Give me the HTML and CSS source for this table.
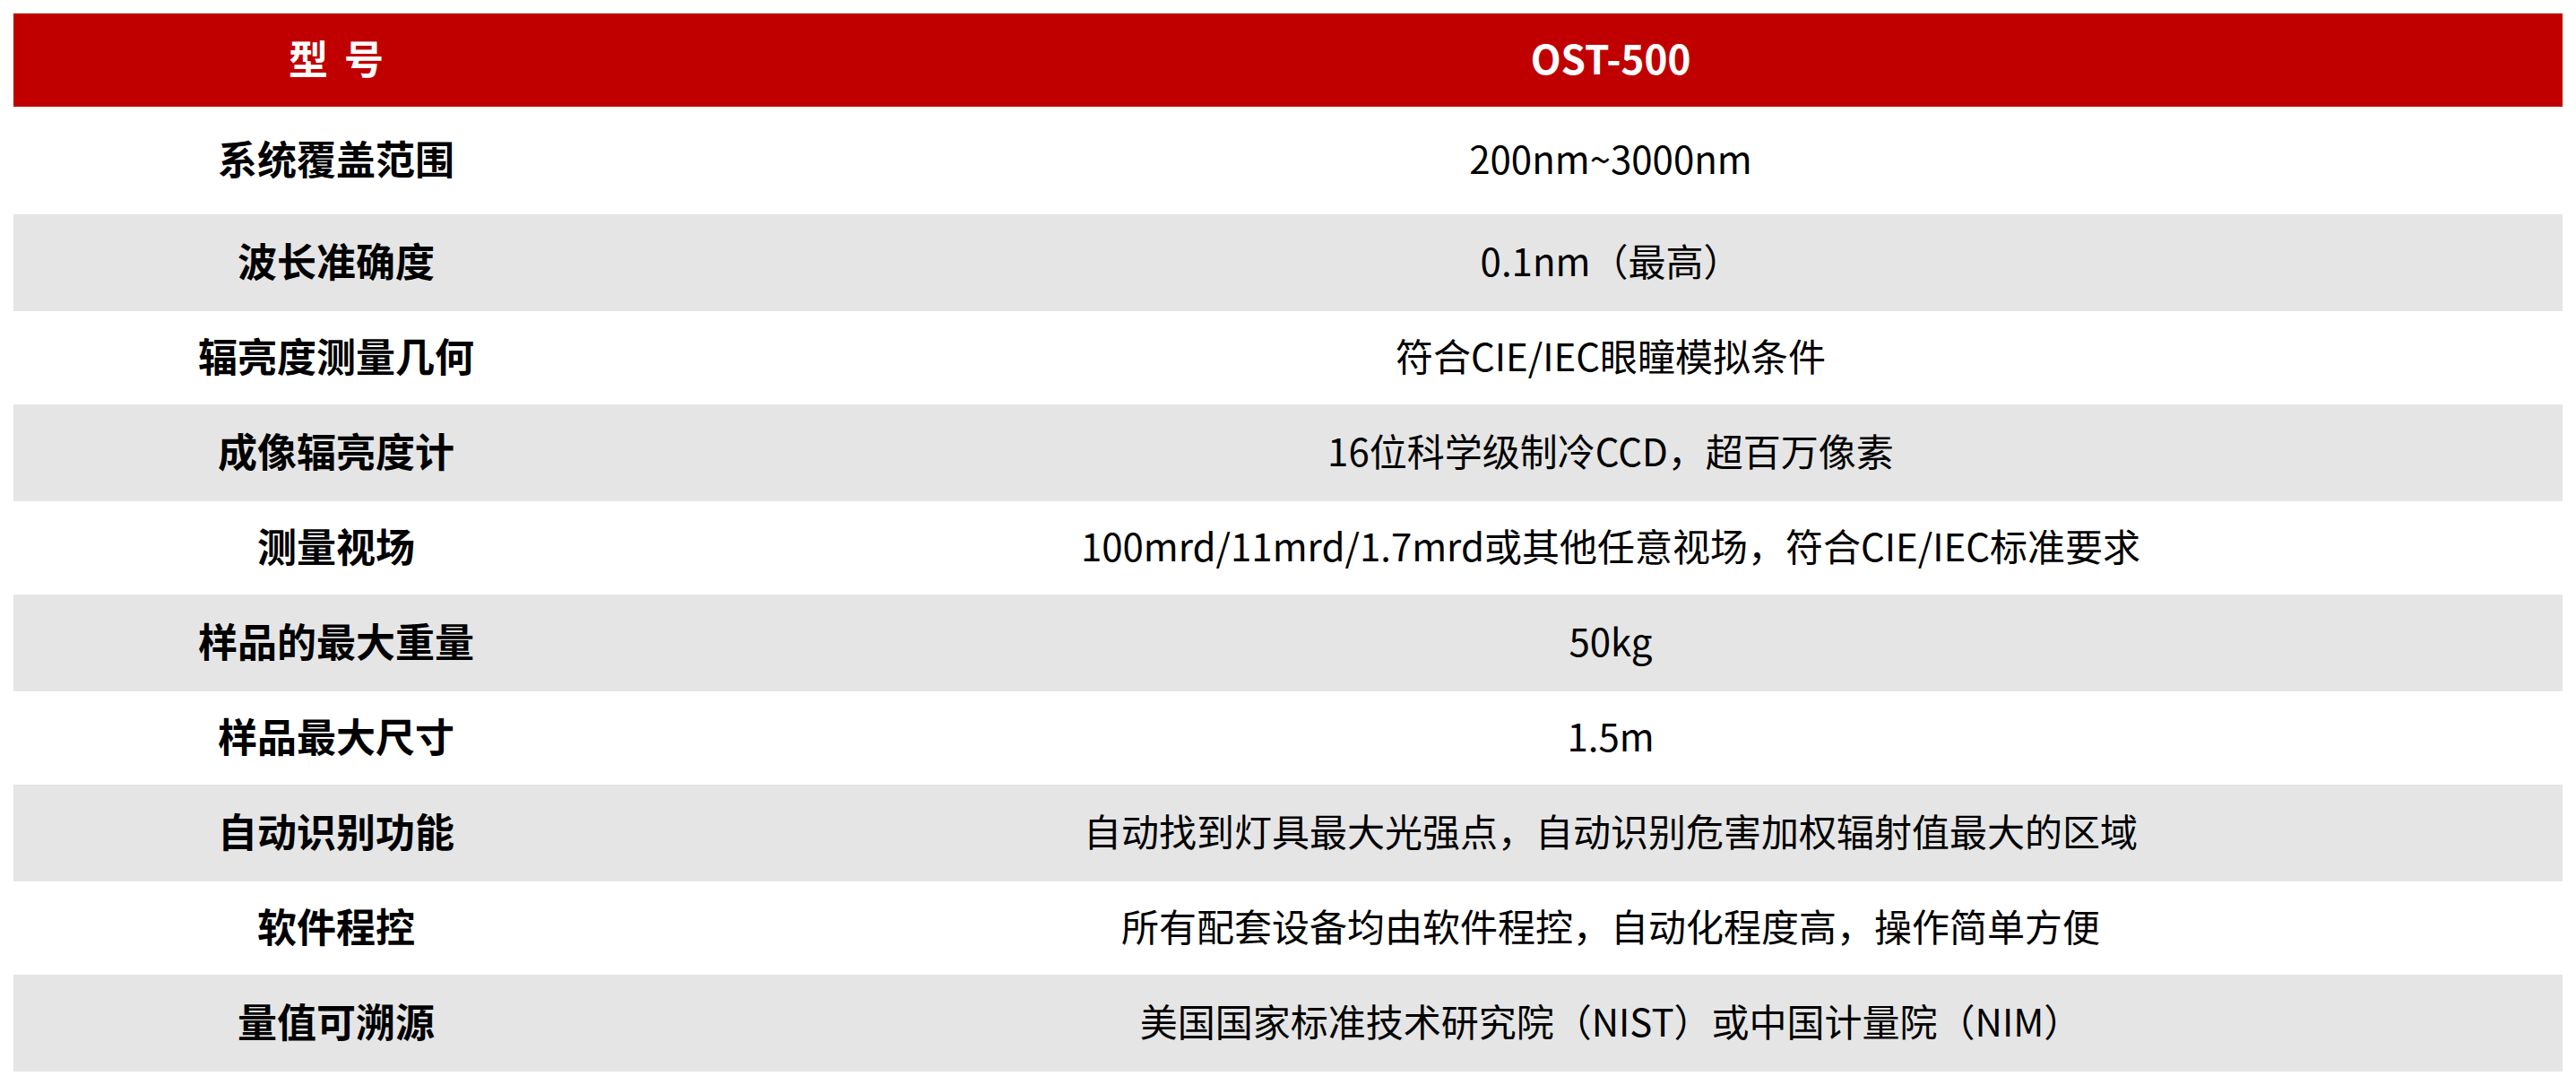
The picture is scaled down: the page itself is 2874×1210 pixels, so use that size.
FILE: index.html
```html
<!DOCTYPE html>
<html lang="zh-CN">
<head>
<meta charset="utf-8">
<title>OST-500 参数</title>
<link rel="stylesheet" href="styles.css">
</head>
<body>
<div class="spec">
  <div class="row head">
    <div class="cell label"><span class="model-title">型 号</span></div>
    <div class="cell value">OST-500</div>
  </div>
  <div class="row white first">
    <div class="cell label">系统覆盖范围</div>
    <div class="cell value">200nm~3000nm</div>
  </div>
  <div class="row gray">
    <div class="cell label">波长准确度</div>
    <div class="cell value">0.1nm（最高）</div>
  </div>
  <div class="row white">
    <div class="cell label">辐亮度测量几何</div>
    <div class="cell value">符合CIE/IEC眼瞳模拟条件</div>
  </div>
  <div class="row gray">
    <div class="cell label">成像辐亮度计</div>
    <div class="cell value">16位科学级制冷CCD，超百万像素</div>
  </div>
  <div class="row white">
    <div class="cell label">测量视场</div>
    <div class="cell value">100mrd/11mrd/1.7mrd或其他任意视场，符合CIE/IEC标准要求</div>
  </div>
  <div class="row gray">
    <div class="cell label">样品的最大重量</div>
    <div class="cell value">50kg</div>
  </div>
  <div class="row white">
    <div class="cell label">样品最大尺寸</div>
    <div class="cell value">1.5m</div>
  </div>
  <div class="row gray">
    <div class="cell label">自动识别功能</div>
    <div class="cell value">自动找到灯具最大光强点，自动识别危害加权辐射值最大的区域</div>
  </div>
  <div class="row white">
    <div class="cell label">软件程控</div>
    <div class="cell value">所有配套设备均由软件程控，自动化程度高，操作简单方便</div>
  </div>
  <div class="row gray">
    <div class="cell label">量值可溯源</div>
    <div class="cell value">美国国家标准技术研究院（NIST）或中国计量院（NIM）</div>
  </div>
</div>
</body>
</html>
```

FILE: styles.css
```css
html, body {
  margin: 0;
  padding: 0;
  background: #ffffff;
}

body {
  font-family: "Noto Sans CJK SC", "Noto Sans", sans-serif;
  color: #000000;
}

.spec {
  width: 2844px;
  margin: 15px 0 0 15px;
  display: flex;
  flex-direction: column;
}

.row {
  display: grid;
  grid-template-columns: 720px 1fr;
  align-items: center;
}

.row.head {
  height: 104px;
  background: #c00000;
  color: #ffffff;
}

.row.white {
  height: 104px;
  background: #ffffff;
}

.row.white.first {
  height: 120px;
}

.row.gray {
  height: 108px;
  background: #e5e5e5;
}

.cell {
  text-align: center;
  white-space: nowrap;
  line-height: 1.2;
  padding-bottom: 5px;
}

.label {
  font-size: 44px;
  font-weight: 700;
}

.value {
  font-size: 42px;
  font-weight: 400;
}

.head .cell {
  font-size: 44px;
  font-weight: 700;
}

.model-title {
  word-spacing: 8px;
}
```
